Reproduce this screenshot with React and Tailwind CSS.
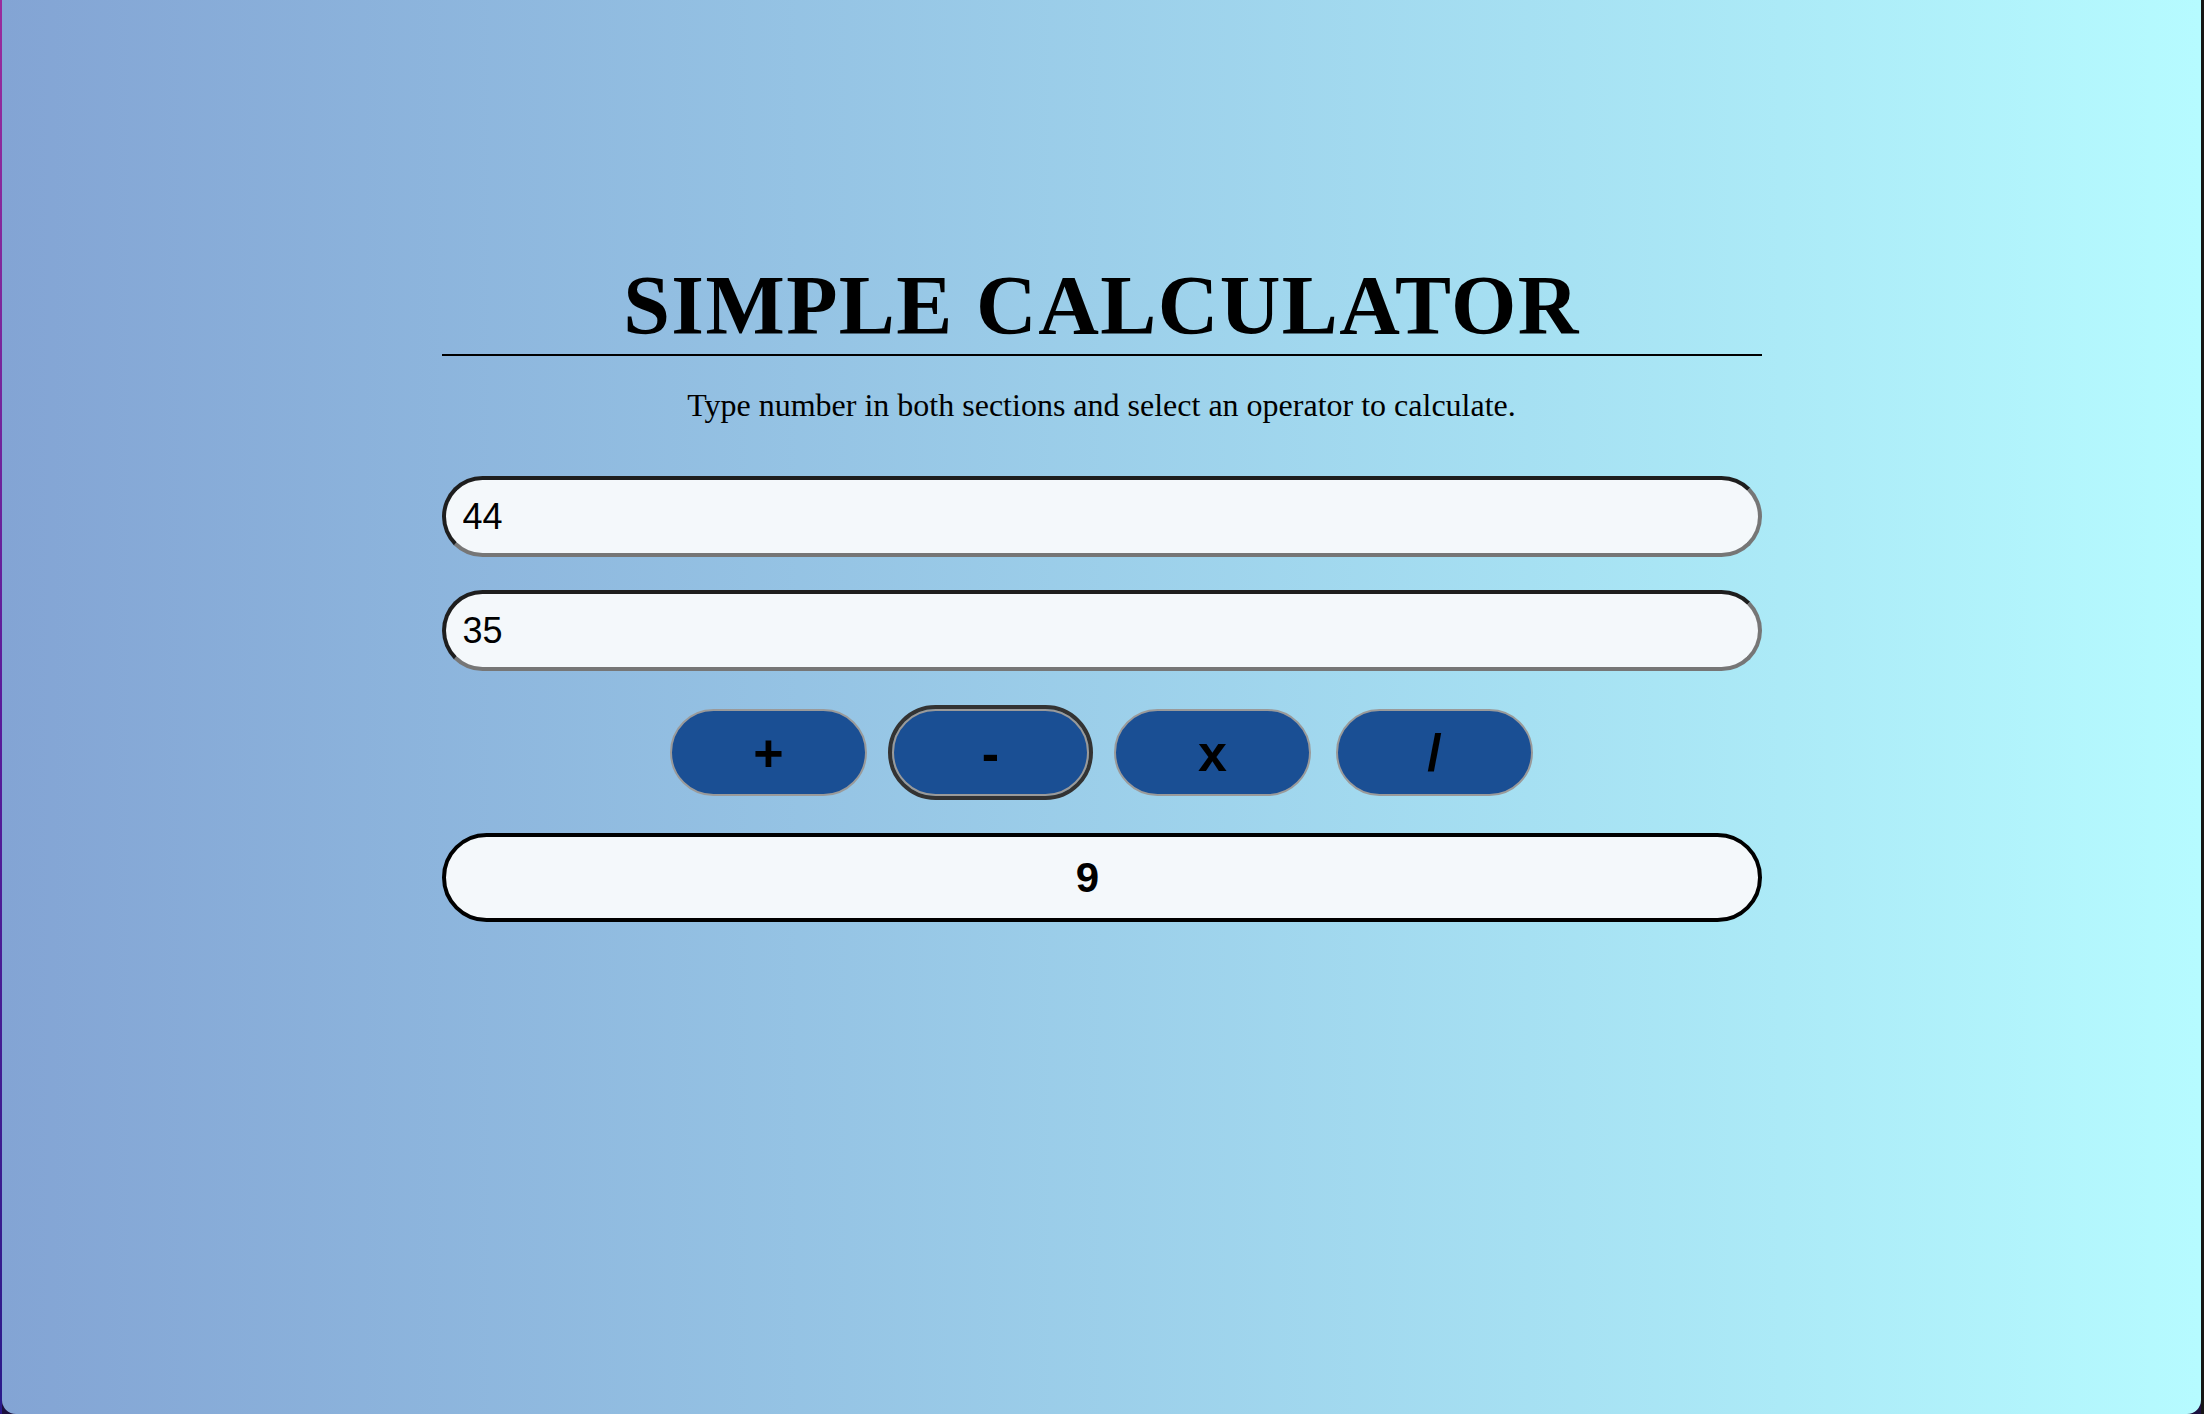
import { useState } from 'react';

const ops = [
  { key: '+', fn: (a, b) => a + b },
  { key: '-', fn: (a, b) => a - b },
  { key: 'x', fn: (a, b) => a * b },
  { key: '/', fn: (a, b) => a / b },
];

export default function App() {
  const [first, setFirst] = useState('44');
  const [second, setSecond] = useState('35');
  const [active, setActive] = useState('-');
  const [result, setResult] = useState('9');

  const calculate = (op) => {
    setActive(op.key);
    const a = parseFloat(first);
    const b = parseFloat(second);
    if (isNaN(a) || isNaN(b)) return setResult('');
    setResult(String(op.fn(a, b)));
  };

  return (
    <div className="flex min-h-screen bg-[#1c1140]">
      {/* desktop edge behind the window */}
      <div className="w-[2px] bg-linear-to-b from-[#9a2a9c] via-[#5a1a9a] to-[#2a1a8a]" />

      <main className="flex-1 rounded-b-[14px] bg-linear-to-r from-[#83a4d4] to-[#b6fbff]">
        <div className="mx-auto w-[1320px] pt-[264px]">
          {/* Header */}
          <h1 className="border-b-2 border-black pb-[6px] text-center font-['Liberation_Serif',serif] text-[84px] leading-[84px] font-bold tracking-[1.4px] text-black">
            SIMPLE CALCULATOR
          </h1>
          <p className="mt-[33px] text-center font-['Liberation_Serif',serif] text-[32px] leading-[32px] text-black">
            Type number in both sections and select an operator to calculate.
          </p>

          {/* Inputs */}
          <div className="mt-[55px] flex flex-col gap-[33px] font-['Liberation_Sans',Arial,sans-serif]">
            <input
              value={first}
              onChange={(e) => setFirst(e.target.value)}
              className="h-[81px] w-full rounded-full border-4 border-t-[#1e1e1e] border-l-[#1e1e1e] border-r-[#767676] border-b-[#767676] bg-[#f4f8fb] pl-[17px] text-[36px] text-black outline-none"
            />
            <input
              value={second}
              onChange={(e) => setSecond(e.target.value)}
              className="h-[81px] w-full rounded-full border-4 border-t-[#1e1e1e] border-l-[#1e1e1e] border-r-[#767676] border-b-[#767676] bg-[#f4f8fb] pl-[17px] text-[36px] text-black outline-none"
            />
          </div>

          {/* Operators */}
          <div className="mt-[38px] flex justify-center gap-[25px] font-['Liberation_Sans',Arial,sans-serif]">
            {ops.map((op) => (
              <button
                key={op.key}
                onClick={() => calculate(op)}
                className={`h-[87px] w-[197px] rounded-full border-2 border-[#9a9a9a] bg-[#1a4f94] text-[52px] leading-none font-bold text-black ${
                  active === op.key ? 'outline-4 outline-[#333333]' : ''
                }`}
              >
                {op.key}
              </button>
            ))}
          </div>

          {/* Result */}
          <div className="mt-[37px] flex h-[89px] items-center justify-center rounded-full border-4 border-black bg-[#f4f8fb] pr-[28px] font-['Liberation_Sans',Arial,sans-serif] text-[42px] font-bold text-black">
            {result}
          </div>
        </div>
      </main>

      <div className="w-[3px] bg-[#161616]" />
    </div>
  );
}
